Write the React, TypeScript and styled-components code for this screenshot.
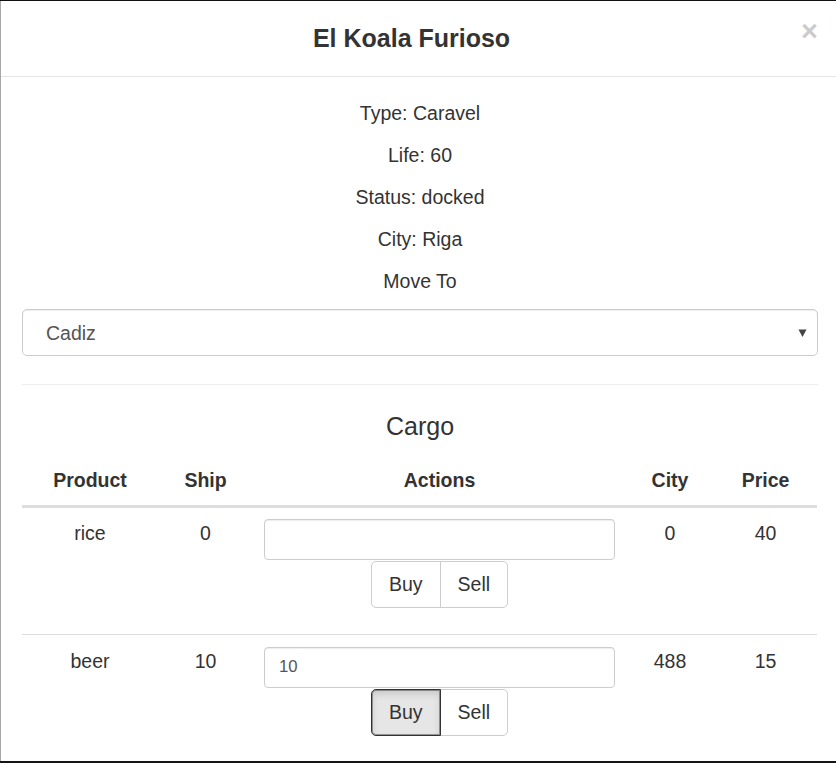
import React from "react";
import styled, { createGlobalStyle } from "styled-components";

const Global = createGlobalStyle`
  html, body { margin: 0; padding: 0; overflow: hidden; background: #fff; }
  body { font-family: "Liberation Sans", Arial, sans-serif; color: #333; }
  * { box-sizing: border-box; }
`;

const Viewport = styled.div`
  width: 836px;
  height: 763px;
  overflow: hidden;
  border-top: 1px solid #111;
  border-bottom: 2px solid #151515;
`;

const Modal = styled.div`
  width: 839px;
  background: #fff;
  border-left: 1px solid #a8a8a8;
`;

const Header = styled.div`
  display: flex;
  align-items: flex-start;
  padding: 19px 21px 20px;
  border-bottom: 1px solid #e5e5e5;
`;

const Title = styled.h4`
  flex: 1;
  margin: 0;
  font-size: 25px;
  line-height: 36px;
  font-weight: 700;
  text-align: center;
  color: #333;
`;

const Close = styled.button`
  margin-top: -3px;
  padding: 0;
  border: 0;
  background: transparent;
  font-family: "Liberation Sans", Arial, sans-serif;
  font-size: 29px;
  font-weight: 700;
  line-height: 1;
  color: #000;
  opacity: 0.2;
  cursor: pointer;
`;

const Body = styled.div`
  padding: 22px 21px 21px;
`;

const Info = styled.p`
  margin: 0 0 14px;
  font-size: 19.5px;
  line-height: 28px;
  text-align: center;
`;

const SelectBox = styled.div`
  display: flex;
  align-items: center;
  justify-content: space-between;
  height: 47px;
  padding: 0 10px 0 23px;
  border: 1px solid #ccc;
  border-radius: 5px;
  box-shadow: inset 0 1px 1px rgba(0, 0, 0, 0.075);
  font-size: 19.5px;
  line-height: 28px;
  color: #555;
`;

const SelectValue = styled.span`
  padding-top: 1px;
`;

const Rule = styled.hr`
  margin: 28px 0;
  border: 0;
  border-top: 1px solid #eee;
`;

const Subtitle = styled.h4`
  margin: 0 0 14px;
  font-size: 25px;
  line-height: 27.5px;
  font-weight: 400;
  text-align: center;
  color: #333;
`;

const Table = styled.table`
  width: 795px;
  border-collapse: collapse;
  table-layout: fixed;
  font-size: 19.5px;
  line-height: 28px;
`;

const Th = styled.th`
  padding: 11px;
  text-align: center;
  font-weight: 700;
  border-bottom: 3px solid #ddd;
`;

const Td = styled.td<{ $first?: boolean }>`
  padding: ${(p) => (p.$first ? "11px" : "12px")} 11px 0;
  text-align: center;
  vertical-align: top;
  border-top: ${(p) => (p.$first ? "0" : "1px solid #ddd")};
`;

const Input = styled.input`
  display: block;
  width: 100%;
  height: 41px;
  padding: 7px 14px;
  border: 1px solid #ccc;
  border-radius: 4px;
  box-shadow: inset 0 1px 1px rgba(0, 0, 0, 0.075);
  font-family: "Liberation Sans", Arial, sans-serif;
  font-size: 16.7px;
  color: #555;
  outline: none;
`;

const ButtonGroup = styled.div`
  display: inline-flex;
  margin: 1px 0 26px;
`;

const Btn = styled.button<{ $active?: boolean; $pos: "left" | "right" }>`
  position: relative;
  z-index: ${(p) => (p.$active ? 2 : 1)};
  height: 47px;
  padding: 0 17px;
  margin-left: ${(p) => (p.$pos === "right" ? "-1px" : "0")};
  font-family: "Liberation Sans", Arial, sans-serif;
  font-size: 19.5px;
  color: #333;
  background: ${(p) => (p.$active ? "#e6e6e6" : "#fff")};
  border: 1px solid ${(p) => (p.$active ? "#333" : "#ccc")};
  border-radius: ${(p) => (p.$pos === "left" ? "5px 0 0 5px" : "0 5px 5px 0")};
  box-shadow: ${(p) =>
    p.$active ? "inset 0 0 0 1px rgba(0,0,0,0.35), inset 0 4px 7px rgba(0,0,0,0.125)" : "none"};
  cursor: pointer;
`;

type Row = { product: string; ship: number; value: string; city: number; price: number; active?: boolean };

const rows: Row[] = [
  { product: "rice", ship: 0, value: "", city: 0, price: 40 },
  { product: "beer", ship: 10, value: "10", city: 488, price: 15, active: true },
];

export default function App() {
  return (
    <>
      <Global />
      <Viewport>
        <Modal>
          <Header>
            <Title>El Koala Furioso</Title>
            <Close aria-label="Close">×</Close>
          </Header>
          <Body>
            <Info>Type: Caravel</Info>
            <Info>Life: 60</Info>
            <Info>Status: docked</Info>
            <Info>City: Riga</Info>
            <Info>Move To</Info>
            <SelectBox>
              <SelectValue>Cadiz</SelectValue>
              <svg width="9" height="10" viewBox="0 0 9 10">
                <path d="M0.5 1.5 L8.5 1.5 L4.5 9 Z" fill="#444" />
              </svg>
            </SelectBox>
            <Rule />
            <Subtitle>Cargo</Subtitle>
            <Table>
              <colgroup>
                <col style={{ width: 136 }} />
                <col style={{ width: 95 }} />
                <col style={{ width: 373 }} />
                <col style={{ width: 88 }} />
                <col style={{ width: 103 }} />
              </colgroup>
              <thead>
                <tr>
                  <Th>Product</Th>
                  <Th>Ship</Th>
                  <Th>Actions</Th>
                  <Th>City</Th>
                  <Th>Price</Th>
                </tr>
              </thead>
              <tbody>
                {rows.map((r, i) => (
                  <tr key={r.product}>
                    <Td $first={i === 0}>{r.product}</Td>
                    <Td $first={i === 0}>{r.ship}</Td>
                    <Td $first={i === 0}>
                      <Input defaultValue={r.value} />
                      <ButtonGroup>
                        <Btn $pos="left" $active={r.active}>Buy</Btn>
                        <Btn $pos="right">Sell</Btn>
                      </ButtonGroup>
                    </Td>
                    <Td $first={i === 0}>{r.city}</Td>
                    <Td $first={i === 0}>{r.price}</Td>
                  </tr>
                ))}
              </tbody>
            </Table>
          </Body>
        </Modal>
      </Viewport>
    </>
  );
}
